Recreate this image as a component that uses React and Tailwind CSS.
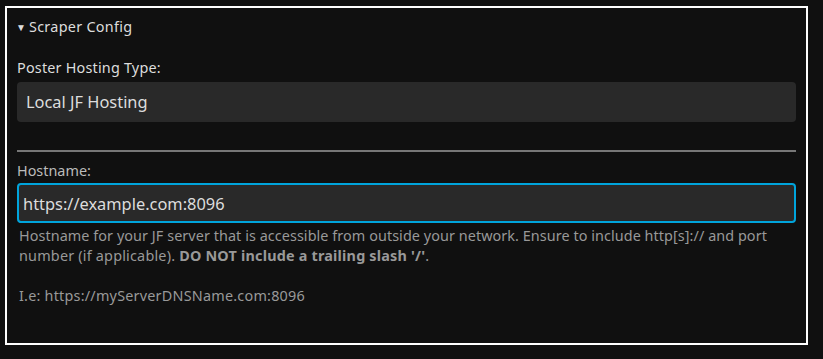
import { useState } from "react";

function App() {
  const [hostingType, setHostingType] = useState("Local JF Hosting");
  const [hostname, setHostname] = useState("https://example.com:8096");

  return (
    <div
      className="w-[823px] h-[359px] bg-[#101010] pt-[6px] pl-[5px] text-[#dddddd]"
      style={{ fontFamily: '"Noto Sans", "Open Sans", sans-serif' }}
    >
      <div className="w-[803px] h-[339px] border-2 border-white px-[10px] pt-[9px]">
        {/* SUMMARY */}
        <div className="flex items-center h-[20px] text-[14.4px] leading-[20px]">
          <span className="text-[10px] w-[13px] -ml-[1px]">▼</span>
          <span className="tracking-[0.28px]">Scraper Config</span>
        </div>

        {/* POSTER HOSTING TYPE */}
        <div className="mt-[21px] text-[14.4px] leading-[20px] tracking-[0.2px]">Poster Hosting Type:</div>
        <div className="mt-[4px] h-[40px] rounded-[4px] bg-[#292929] flex items-center px-[9px] text-[16.4px]">
          {hostingType}
        </div>

        <div className="mt-[28px] h-[2px] bg-[#777777]" />

        {/* HOSTNAME */}
        <div className="mt-[9px] text-[14.4px] leading-[20px] text-[#bbbbbb]">Hostname:</div>
        <input
          type="text"
          value={hostname}
          onChange={(e) => setHostname(e.target.value)}
          className="mt-[2px] w-full h-[40px] rounded-[4px] bg-[#292929] border-2 border-[#00a4dc] px-[4px] text-[16.4px] text-[#dddddd] outline-none"
          style={{ fontFamily: '"Noto Sans", "Open Sans", sans-serif' }}
        />
        <div className="mt-[3px] px-[2px] text-[14.4px] leading-[20px] text-[#999999] whitespace-nowrap">
          <span className="tracking-[0.065px]">
            Hostname for your JF server that is accessible from outside your network. Ensure to include http[s]:// and port
          </span>
          <br />
          <span className="tracking-[0.2px]">
            number (if applicable). <b>DO NOT include a trailing slash '/'</b>.
          </span>
          <br />
          <br />
          <span className="tracking-[0.22px]">I.e: https://myServerDNSName.com:8096</span>
        </div>
      </div>
    </div>
  );
}

export default App;
